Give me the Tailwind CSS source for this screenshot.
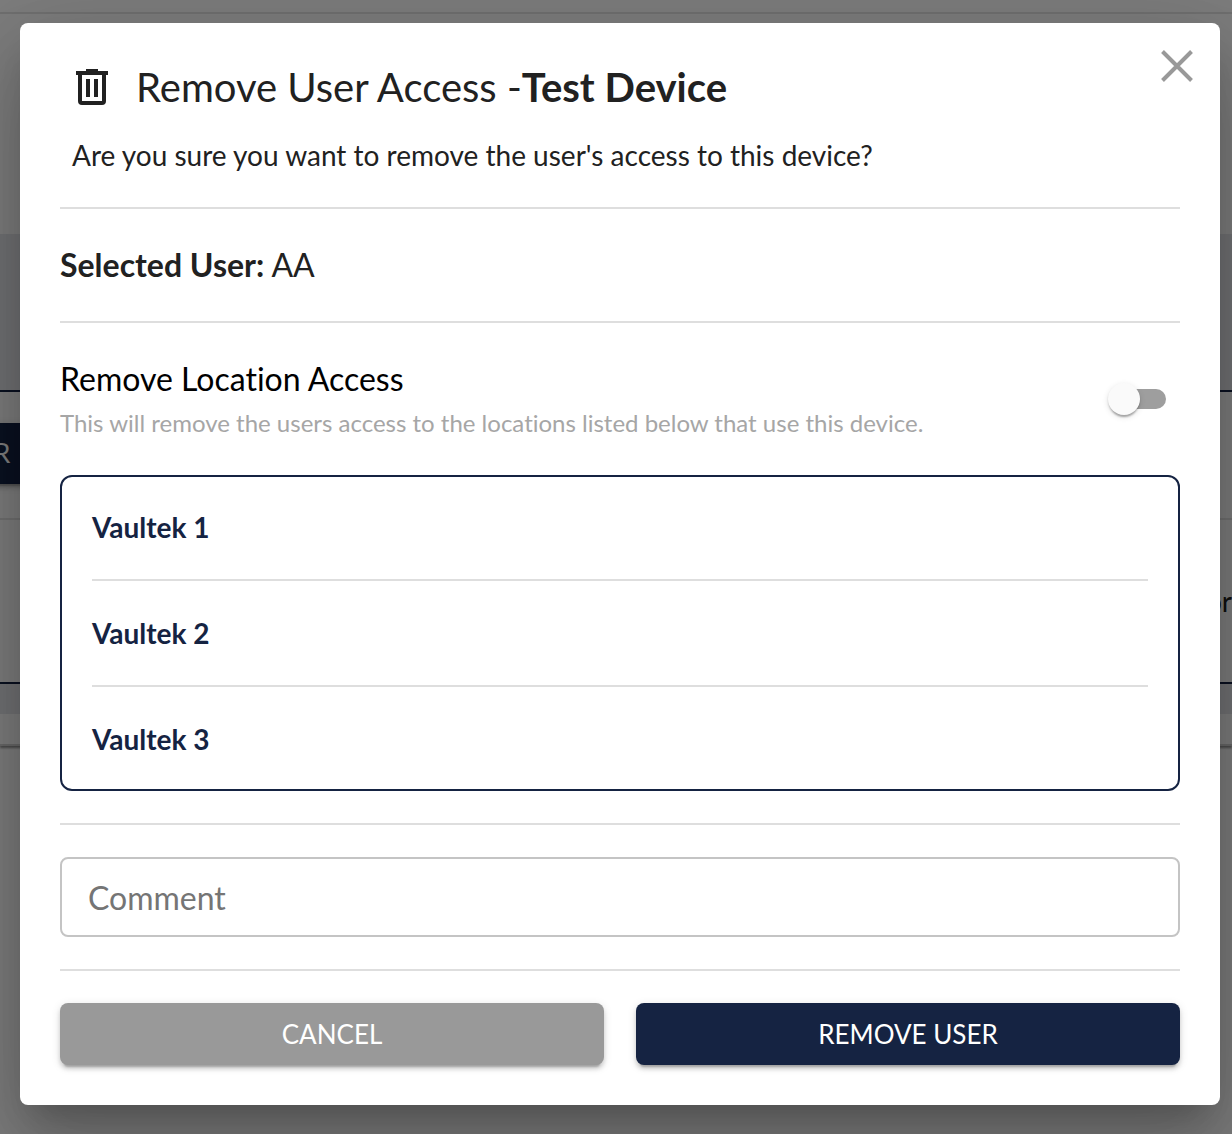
<!DOCTYPE html>
<html lang="en">
<head>
<meta charset="utf-8">
<meta name="viewport" content="width=device-width, initial-scale=1">
<title>Remove User Access</title>
<script src="https://cdn.jsdelivr.net/npm/@tailwindcss/browser@4"></script>
</head>
<body class="relative min-h-screen overflow-hidden bg-[#fafafa] font-[Lato,sans-serif] text-[#212121] [font-variant-ligatures:no-common-ligatures]">
  <!-- Device page behind the dialog -->
  <div aria-hidden="true" class="pt-3">
    <section class="border-t-2 border-[#e0e0e0] pt-[220px]">
      <div class="h-[156px] bg-[#e2e5e8]"></div>
      <div class="border-t-2 border-[#152342] pt-[31px]">
        <button type="button" tabindex="-1" class="-ml-5 flex h-[61px] w-60 items-center rounded-lg bg-[#152342] pl-[14px] text-[26px] text-white shadow-[0_6px_2px_-4px_rgba(0,0,0,0.2),0_4px_4px_rgba(0,0,0,0.14),0_2px_10px_rgba(0,0,0,0.12)]">R</button>
      </div>
      <div class="mt-[34px] flex h-[164px] items-center justify-end border-t-2 border-[#e0e0e0] text-[28px]">
        <span>or</span>
      </div>
      <div class="h-8 border-t-2 border-[#152342] bg-[#e2e5e8]"></div>
      <div class="h-8 border-b-2 border-[#d0d0d0] shadow-[0_2px_2px_rgba(0,0,0,0.4)]"></div>
    </section>
  </div>

  <!-- Backdrop and dialog -->
  <div class="absolute inset-0 bg-black/50 pt-[23px] pr-3 pb-7 pl-5">
    <div role="dialog" aria-modal="true" aria-labelledby="dialog-title" class="relative rounded-lg bg-white p-10 shadow-[0_22px_30px_-14px_rgba(0,0,0,0.2),0_48px_76px_6px_rgba(0,0,0,0.14),0_18px_92px_16px_rgba(0,0,0,0.12)]">
      <button type="button" aria-label="Close" class="absolute top-[23px] right-[23px] size-10 text-[#999]">
        <svg viewBox="0 0 40 40" class="size-10" fill="none" stroke="currentColor" stroke-width="4"><path d="M5.500 5.500 34.500 34.500M34.500 5.500 5.500 34.500"/></svg>
      </button>

      <header class="flex items-center gap-5 pl-2">
        <svg viewBox="0 0 24 24" class="size-12 shrink-0" fill="currentColor" aria-hidden="true"><path d="M9 3v1H4v2h1v13a2 2 0 0 0 2 2h10a2 2 0 0 0 2-2V6h1V4h-5V3H9M7 6h10v13H7V6m2 2v9h2V8H9m4 0v9h2V8h-2Z"/></svg>
        <h1 id="dialog-title" class="text-[40px] leading-[48px]">Remove User Access -<b class="font-bold">Test Device</b></h1>
      </header>
      <p class="mt-6 pl-3 text-[28px] leading-10">Are you sure you want to remove the user's access to this device?</p>

      <hr class="my-8 border-t-2 border-[#dedede]">
      <p class="text-[32px] leading-[48px]"><b class="font-bold">Selected User:</b> AA</p>
      <hr class="my-8 border-t-2 border-[#dedede]">

      <div class="flex items-center justify-between">
        <div>
          <h2 class="text-[32px] leading-[48px] text-black"><label for="location-access">Remove Location Access</label></h2>
          <p id="location-help" class="text-2xl leading-10 text-[#a6a6a6]">This will remove the users access to the locations listed below that use this device.</p>
        </div>
        <input id="location-access" type="checkbox" role="switch" aria-describedby="location-help" class="relative mr-[14px] h-5 w-14 shrink-0 appearance-none rounded-full bg-[#9e9e9e] before:absolute before:-top-1.5 before:-left-0.5 before:size-8 before:rounded-full before:bg-[#fafafa] before:shadow-[0_4px_2px_-2px_rgba(0,0,0,0.2),0_2px_2px_rgba(0,0,0,0.14),0_2px_6px_rgba(0,0,0,0.12)] checked:before:left-7">
      </div>

      <ul class="mt-8 rounded-xl border-2 border-[#152342] p-[30px] text-[28px] leading-10 font-bold text-[#152342]">
        <li class="border-b-2 border-[#dedede] pb-8">Vaultek 1</li>
        <li class="border-b-2 border-[#dedede] py-8">Vaultek 2</li>
        <li class="pt-8">Vaultek 3</li>
      </ul>

      <hr class="my-8 border-t-2 border-[#dedede]">
      <input type="text" aria-label="Comment" placeholder="Comment" class="block h-20 w-full rounded-lg border-2 border-[#c4c4c4] px-[26px] text-[32px] placeholder:text-[#757575]">
      <hr class="my-8 border-t-2 border-[#dedede]">

      <div class="grid grid-cols-2 gap-8 text-[26px] text-white">
        <button type="button" class="h-[62px] rounded-lg bg-[#999] shadow-[0_6px_2px_-4px_rgba(0,0,0,0.2),0_4px_4px_rgba(0,0,0,0.14),0_2px_10px_rgba(0,0,0,0.12)]">CANCEL</button>
        <button type="button" class="h-[62px] rounded-lg bg-[#152342] shadow-[0_6px_2px_-4px_rgba(0,0,0,0.2),0_4px_4px_rgba(0,0,0,0.14),0_2px_10px_rgba(0,0,0,0.12)]">REMOVE USER</button>
      </div>
    </div>
  </div>
</body>
</html>
